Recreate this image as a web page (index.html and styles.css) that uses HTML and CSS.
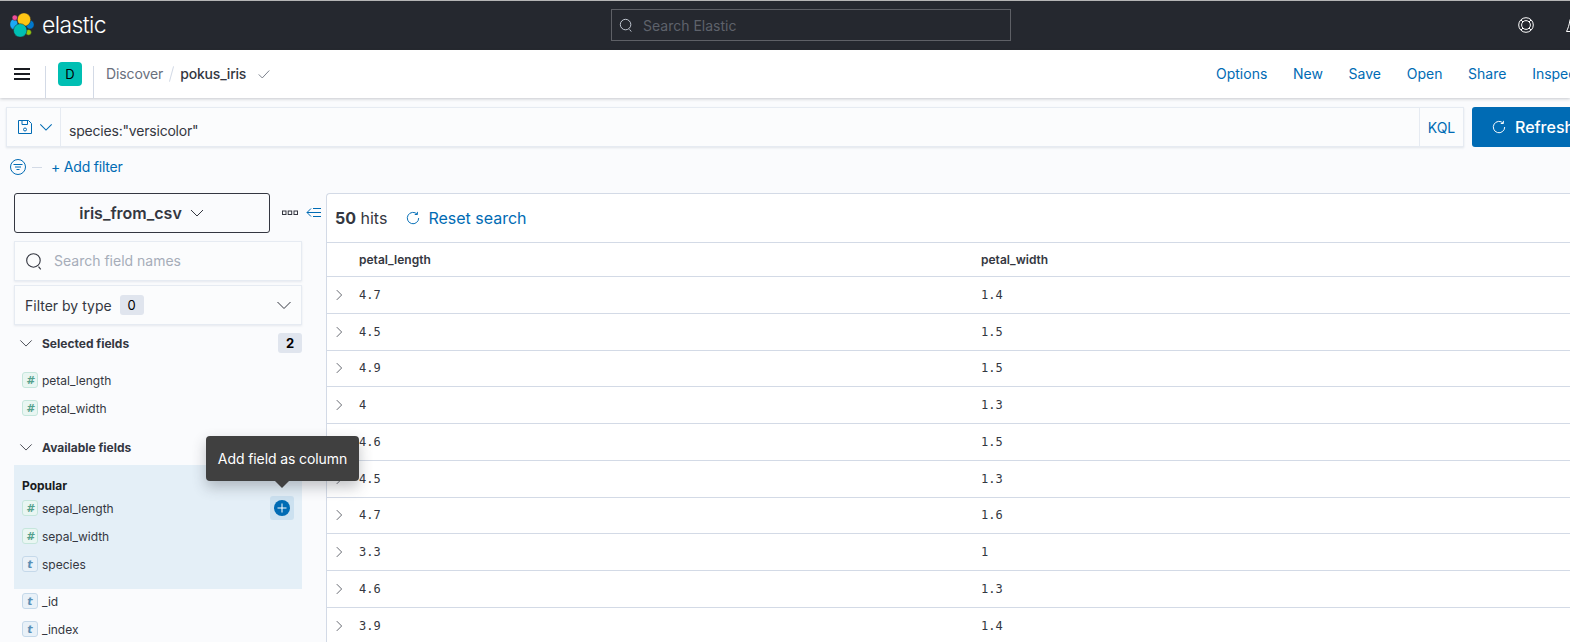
FILE: index.html
```html
<!DOCTYPE html>
<html lang="en">
<head>
  <meta charset="UTF-8">
  <title>Discover - Elastic</title>
  <link rel="stylesheet" href="styles.css">
</head>
<body>

  <header class="topbar">
    <div class="brand">
      <svg class="logo" viewBox="0 0 24 24" width="24" height="24">
        <g stroke="#25282f" stroke-width=".5">
          <ellipse cx="3.900" cy="11.200" rx="4" ry="5.200" fill="#1ba9f5"/>
          <ellipse cx="20" cy="11.700" rx="4.100" ry="4.400" fill="#0077cc"/>
          <circle cx="14" cy="6.600" r="6.700" fill="#fec514"/>
          <circle cx="4.800" cy="4.700" r="2.700" fill="#f04e98"/>
          <circle cx="18.500" cy="19.300" r="2.900" fill="#93c90e"/>
          <circle cx="10.200" cy="17.400" r="6.700" fill="#00bfb3"/>
        </g>
      </svg>
      <span class="brand-name">elastic</span>
    </div>
    <div class="global-search">
      <svg viewBox="0 0 16 16" width="14" height="14"><path fill="none" stroke="#d4dae5" d="M7.500 1.500a6 6 0 1 0 0 12 6 6 0 0 0 0-12zM12 13l2 2.500"/></svg>
      <span>Search Elastic</span>
    </div>
    <svg class="help-icon" viewBox="0 0 16 16" width="16" height="16">
      <g fill="none" stroke="#fff"><circle cx="8" cy="8" r="7.300"/><circle cx="8" cy="8" r="4.400"/><path d="M3 3l2 2M13 3l-2 2M3 13l2-2M13 13l-2-2"/></g>
    </svg>
    <svg class="bell-icon" viewBox="0 0 16 16" width="16" height="16">
      <path fill="none" stroke="#fff" d="M8 0C5 0 4.200 2 3.800 4 3.200 8 2 11.500.5 14.500H16"/>
    </svg>
  </header>

  <nav class="navbar">
    <button class="burger"><span></span><span></span><span></span></button>
    <div class="space-cell"><div class="avatar">D</div></div>
    <div class="crumbs">
      <span class="crumb-link">Discover</span>
      <span class="crumb-sep"></span>
      <span class="crumb-last">pokus_iris</span>
      <svg class="crumb-check" viewBox="0 0 16 16" width="14" height="14"><path fill="none" stroke="#69707d" d="M2 8.500 6 12.500 14 4"/></svg>
    </div>
    <div class="nav-links">
      <a>Options</a><a>New</a><a>Save</a><a>Open</a><a>Share</a><a>Inspect</a>
    </div>
  </nav>

  <section class="query-row">
    <div class="query-bar">
      <div class="query-save">
        <svg viewBox="0 0 16 16" width="16" height="16"><g fill="none" stroke="#006bb4"><path d="M1.500 1.500h10l3 3v10h-13z"/><path d="M5 1.500v4h5.500v-4"/><circle cx="8" cy="10.500" r="1.500"/></g></svg>
        <svg viewBox="0 0 16 16" width="14" height="14"><path fill="none" stroke="#006bb4" stroke-width="1.200" d="M1.500 5 8 11.500 14.500 5"/></svg>
      </div>
      <div class="query-text">species:"versicolor"</div>
      <div class="query-lang">KQL</div>
    </div>
    <button class="refresh">
      <svg viewBox="0 0 16 16" width="14" height="14"><path fill="none" stroke="#fff" stroke-width="1.100" d="M12.800 3.700A6.500 6.500 0 1 0 14.500 8M13 1v3h-3"/></svg>
      Refresh
    </button>
  </section>

  <section class="filter-row">
    <svg viewBox="0 0 16 16" width="16" height="16"><g fill="none" stroke="#006bb4"><circle cx="8" cy="8" r="7.500"/><path d="M3.500 5.500h9M5 8h6M6.500 10.500h3"/></g></svg>
    <span class="filter-dash"></span>
    <a class="add-filter">+ Add filter</a>
  </section>

  <div class="content">
    <aside class="sidebar">
      <div class="index-row">
        <button class="index-btn">
          iris_from_csv
          <svg viewBox="0 0 16 16" width="16" height="16"><path fill="none" stroke="#343741" d="M2 5 8 11 14 5"/></svg>
        </button>
        <svg class="dots" viewBox="0 0 16 16" width="16" height="16"><g fill="none" stroke="#343741"><rect x=".5" y="6" width="3.500" height="3.500"/><rect x="6.200" y="6" width="3.500" height="3.500"/><rect x="12" y="6" width="3.500" height="3.500"/></g></svg>
        <svg class="collapse" viewBox="0 0 16 16" width="16" height="16"><path fill="none" stroke="#006bb4" d="M5 3.500 1 7.500l4 4M1 7.500h14M7 3.500h8M7 11.500h8"/></svg>
      </div>

      <div class="field-box field-search">
        <svg viewBox="0 0 16 16" width="18" height="18"><path fill="none" stroke="#343741" d="M7.500 1.500a6 6 0 1 0 0 12 6 6 0 0 0 0-12zM12 13l2 2.500"/></svg>
        <span>Search field names</span>
      </div>
      <div class="field-box field-filter">
        <span>Filter by type</span>
        <span class="count count-zero">0</span>
        <svg viewBox="0 0 16 16" width="16" height="16"><path fill="none" stroke="#343741" d="M1.500 5 8 11.500 14.500 5"/></svg>
      </div>

      <div class="group-head head-selected">
        <svg viewBox="0 0 16 16" width="14" height="14"><path fill="none" stroke="#343741" d="M1.500 5 8 11.500 14.500 5"/></svg>
        <span>Selected fields</span>
        <span class="count count-two">2</span>
      </div>
      <ul class="fields fields-selected">
        <li><i class="token token-num">#</i>petal_length</li>
        <li><i class="token token-num">#</i>petal_width</li>
      </ul>

      <div class="group-head head-available">
        <svg viewBox="0 0 16 16" width="14" height="14"><path fill="none" stroke="#343741" d="M1.500 5 8 11.500 14.500 5"/></svg>
        <span>Available fields</span>
      </div>
      <div class="popular">
        <div class="popular-title">Popular</div>
        <ul class="fields">
          <li>
            <i class="token token-num">#</i>sepal_length
            <span class="add-btn">
              <svg viewBox="0 0 16 16" width="16" height="16"><circle cx="8" cy="8" r="8" fill="#006bb4"/><path stroke="#fff" d="M8 3.500v9M3.500 8h9"/></svg>
            </span>
          </li>
          <li><i class="token token-num">#</i>sepal_width</li>
          <li><i class="token token-text">t</i>species</li>
        </ul>
      </div>
      <ul class="fields fields-rest">
        <li><i class="token token-text">t</i>_id</li>
        <li><i class="token token-text">t</i>_index</li>
      </ul>
      <div class="tooltip">Add field as column</div>
    </aside>

    <main class="results">
      <div class="hits">
        <span><b>50</b> hits</span>
        <a class="reset">
          <svg viewBox="0 0 16 16" width="14" height="14"><path fill="none" stroke="#006bb4" stroke-width="1.100" d="M12.800 3.700A6.500 6.500 0 1 0 14.500 8M13 1v3h-3"/></svg>
          Reset search
        </a>
      </div>
      <div class="doc-head"><span>petal_length</span><span>petal_width</span></div>
      <div class="doc-row"><svg viewBox="0 0 16 16" width="12" height="12"><path d="M5 1.500 11.500 8 5 14.500"/></svg><span>4.7</span><span>1.4</span></div>
      <div class="doc-row"><svg viewBox="0 0 16 16" width="12" height="12"><path d="M5 1.500 11.500 8 5 14.500"/></svg><span>4.5</span><span>1.5</span></div>
      <div class="doc-row"><svg viewBox="0 0 16 16" width="12" height="12"><path d="M5 1.500 11.500 8 5 14.500"/></svg><span>4.9</span><span>1.5</span></div>
      <div class="doc-row"><svg viewBox="0 0 16 16" width="12" height="12"><path d="M5 1.500 11.500 8 5 14.500"/></svg><span>4</span><span>1.3</span></div>
      <div class="doc-row"><svg viewBox="0 0 16 16" width="12" height="12"><path d="M5 1.500 11.500 8 5 14.500"/></svg><span>4.6</span><span>1.5</span></div>
      <div class="doc-row"><svg viewBox="0 0 16 16" width="12" height="12"><path d="M5 1.500 11.500 8 5 14.500"/></svg><span>4.5</span><span>1.3</span></div>
      <div class="doc-row"><svg viewBox="0 0 16 16" width="12" height="12"><path d="M5 1.500 11.500 8 5 14.500"/></svg><span>4.7</span><span>1.6</span></div>
      <div class="doc-row"><svg viewBox="0 0 16 16" width="12" height="12"><path d="M5 1.500 11.500 8 5 14.500"/></svg><span>3.3</span><span>1</span></div>
      <div class="doc-row"><svg viewBox="0 0 16 16" width="12" height="12"><path d="M5 1.500 11.500 8 5 14.500"/></svg><span>4.6</span><span>1.3</span></div>
      <div class="doc-row"><svg viewBox="0 0 16 16" width="12" height="12"><path d="M5 1.500 11.500 8 5 14.500"/></svg><span>3.9</span><span>1.4</span></div>
    </main>
  </div>

</body>
</html>
```

FILE: styles.css
```css
* {
  box-sizing: border-box;
}
html, body {
  height: 642px;
  overflow: hidden;
}
body {
  margin: 0;
  width: 1570px;
  font-family: Inter, "Noto Sans", sans-serif;
  font-size: 14px;
  color: #343741;
  background-color: #fafbfd;
}
svg {
  display: block;
  flex: none;
}
button {
  font-family: inherit;
  cursor: pointer;
}

/* dark top bar */
.topbar {
  height: 50px;
  display: flex;
  align-items: center;
  padding-bottom: 1px;
  background-color: #25282f;
  border-top: 1px solid #b5b5b5;
  white-space: nowrap;
  overflow: hidden;
}
.brand {
  width: 611px;
  flex: none;
  display: flex;
  align-items: center;
  gap: 8px;
  padding-left: 10px;
}
.brand-name {
  color: #fff;
  font-size: 23px;
  font-weight: 300;
  letter-spacing: -0.6px;
}
.global-search {
  width: 400px;
  height: 32px;
  flex: none;
  display: flex;
  align-items: center;
  gap: 10px;
  padding-left: 7px;
  border: 1px solid #5e6066;
  color: #5e626b;
}
.help-icon {
  margin-left: 507px;
}
.bell-icon {
  margin-left: 32px;
}

/* breadcrumb bar */
.navbar {
  height: 48px;
  display: flex;
  background-color: #fff;
  box-shadow: 0 1px 3px rgba(52, 55, 65, 0.25);
  position: relative;
  white-space: nowrap;
}
.burger {
  width: 45px;
  height: 48px;
  flex: none;
  padding: 0 0 0 14px;
  border: none;
  background: none;
  display: flex;
  flex-direction: column;
  justify-content: center;
  gap: 3px;
}
.burger span {
  display: block;
  width: 16px;
  height: 2px;
  background-color: #1a1c21;
}
.space-cell {
  width: 49px;
  flex: none;
  margin-top: 16px;
  padding-left: 12px;
  border-left: 1px solid #d3dae6;
  border-right: 1px solid #d3dae6;
}
.avatar {
  width: 24px;
  height: 24px;
  margin-top: -4px;
  border-radius: 4px;
  background-color: #00bfb3;
  color: #000;
  font-size: 13px;
  display: flex;
  align-items: center;
  justify-content: center;
}
.crumbs {
  width: 1122px;
  flex: none;
  display: flex;
  align-items: center;
  padding: 0 0 1px 12px;
}
.crumb-link {
  color: #69707d;
  letter-spacing: -0.1px;
}
.crumb-sep {
  width: 1px;
  height: 16px;
  margin: 0 8px 0 8px;
  background-color: #d3dae6;
  transform: rotate(15deg);
}
.crumb-last {
  font-weight: 500;
  letter-spacing: -0.2px;
}
.crumb-check {
  margin-left: 11px;
}
.nav-links {
  display: flex;
  align-items: center;
  gap: 25.7px;
  padding-bottom: 1px;
}
.nav-links a {
  color: #006bb4;
}

/* query bar */
.query-row {
  display: flex;
  gap: 8px;
  padding: 9px 0 0 6px;
  white-space: nowrap;
}
.query-bar {
  width: 1458px;
  height: 40px;
  flex: none;
  display: flex;
  align-items: center;
  border: 1px solid #e6ebf2;
  background-color: #fbfcfd;
  box-shadow: 0 1px 2px rgba(152, 162, 179, 0.25);
}
.query-save {
  width: 54px;
  height: 100%;
  display: flex;
  align-items: center;
  gap: 6px;
  padding-left: 10px;
  border-right: 1px solid #e6ebf2;
}
.query-text {
  flex: 1;
  padding: 6px 0 0 8px;
  letter-spacing: -0.2px;
}
.query-lang {
  width: 44px;
  height: 100%;
  display: flex;
  align-items: center;
  justify-content: center;
  border-left: 1px solid #e6ebf2;
  color: #006bb4;
}
.refresh {
  width: 130px;
  height: 40px;
  flex: none;
  display: flex;
  align-items: center;
  gap: 9px;
  padding-left: 20px;
  border: none;
  border-radius: 3px;
  background-color: #006bb4;
  color: #fff;
  font-size: 16px;
  font-weight: 500;
}

/* filter row */
.filter-row {
  height: 16px;
  margin-top: 12px;
  display: flex;
  align-items: center;
  padding-left: 10px;
}
.filter-dash {
  width: 10px;
  height: 1px;
  margin: 0 9px 0 6px;
  background-color: #d3dae6;
}
.add-filter {
  padding-bottom: 2px;
  color: #006bb4;
  letter-spacing: -0.2px;
}

/* sidebar + results */
.content {
  height: 467px;
  margin-top: 18px;
  display: flex;
  overflow: hidden;
}
.sidebar {
  width: 326px;
  flex: none;
  padding-left: 14px;
  position: relative;
}
.index-row {
  display: flex;
  align-items: center;
}
.index-btn {
  width: 256px;
  height: 40px;
  flex: none;
  display: flex;
  align-items: center;
  justify-content: center;
  gap: 7px;
  border: 1px solid #343741;
  border-radius: 3px;
  background-color: #fafbfd;
  color: #343741;
  font-size: 16px;
  font-weight: 600;
}
.dots {
  margin-left: 12px;
}
.collapse {
  margin-left: 8px;
}
.field-box {
  width: 288px;
  height: 40px;
  display: flex;
  align-items: center;
  border: 1px solid #e6ebf2;
  background-color: #fbfcfd;
  box-shadow: 0 1px 2px rgba(152, 162, 179, 0.2);
}
.field-search {
  margin-top: 8px;
  gap: 11px;
  padding: 0 0 1px 10px;
  color: #a6adb9;
}
.field-filter {
  margin-top: 4px;
  padding: 0 9px 0 10px;
}
.count {
  height: 20px;
  border-radius: 3px;
  background-color: #e0e5ee;
  color: #000;
  font-size: 13px;
  display: flex;
  align-items: center;
  justify-content: center;
}
.count-zero {
  width: 24px;
  margin: 0 auto 0 8px;
}
.count-two {
  width: 24px;
  margin-left: auto;
}
.group-head {
  width: 288px;
  display: flex;
  align-items: center;
  gap: 9px;
  padding-left: 5px;
  font-size: 12px;
  font-weight: 700;
  color: #343741;
}
.head-selected {
  margin-top: 8px;
}
.head-available {
  margin-top: 15px;
  height: 20px;
}
.fields {
  list-style: none;
  margin: 0;
  padding: 0;
}
.fields li {
  height: 28px;
  display: flex;
  align-items: center;
  gap: 4px;
  padding-left: 8px;
  font-size: 12px;
  position: relative;
}
.fields-selected {
  width: 288px;
  margin-top: 13px;
}
.fields-rest {
  margin-top: -2px;
}
.token {
  width: 16px;
  height: 16px;
  flex: none;
  display: flex;
  align-items: center;
  justify-content: center;
  border-radius: 3px;
  font-size: 11px;
  font-weight: 700;
  font-family: "DejaVu Sans", sans-serif;
}
.token-num {
  border: 1px solid #c5e6dc;
  background-color: #e9f6f2;
  color: #54a08c;
}
.token-text {
  border: 1px solid #c5d9ea;
  background-color: #e9f1f8;
  color: #5a8fb5;
}
.popular {
  width: 288px;
  height: 124px;
  margin-top: 8px;
  padding-top: 13px;
  background-color: #e4eff7;
}
.popular-title {
  padding-left: 8px;
  font-size: 12px;
  font-weight: 700;
  color: #1a1c21;
  line-height: 16px;
}
.add-btn {
  width: 24px;
  height: 24px;
  margin-left: auto;
  margin-right: 8px;
  display: flex;
  align-items: center;
  justify-content: center;
  border-radius: 3px;
  background-color: #cce1f0;
}
.tooltip {
  position: absolute;
  left: 206px;
  top: 243px;
  width: 153px;
  height: 45px;
  display: flex;
  align-items: center;
  justify-content: center;
  border-radius: 4px;
  background-color: #404040;
  color: #fff;
  font-size: 14px;
  letter-spacing: -0.1px;
  white-space: nowrap;
  box-shadow: 0 6px 14px rgba(52, 55, 65, 0.3);
  z-index: 2;
}
.tooltip::after {
  content: "";
  position: absolute;
  left: 69px;
  bottom: -7px;
  border-left: 7px solid transparent;
  border-right: 7px solid transparent;
  border-top: 7px solid #404040;
}

.results {
  flex: 1;
  border-left: 1px solid #d3dae6;
  border-top: 1px solid #d3dae6;
  border-top-left-radius: 4px;
  background-color: #fff;
}
.hits {
  height: 49px;
  display: flex;
  align-items: center;
  gap: 19px;
  padding: 0 0 1px 8px;
  border-bottom: 1px solid #d3dae6;
  font-size: 16px;
}
.hits b {
  font-weight: 700;
}
.reset {
  display: flex;
  align-items: center;
  gap: 8px;
  color: #006bb4;
}
.doc-head, .doc-row {
  display: grid;
  grid-template-columns: 32px 622px 1fr;
  align-items: center;
  border-bottom: 1px solid #d3dae6;
}
.doc-head {
  height: 34px;
  font-size: 12px;
  font-weight: 600;
}
.doc-head span:first-child {
  grid-column: 2;
}
.doc-row {
  height: 36.75px;
  font-family: "DejaVu Sans Mono", monospace;
  font-size: 12px;
}
.doc-row svg {
  margin-left: 6px;
  fill: none;
  stroke: #343741;
}
```
